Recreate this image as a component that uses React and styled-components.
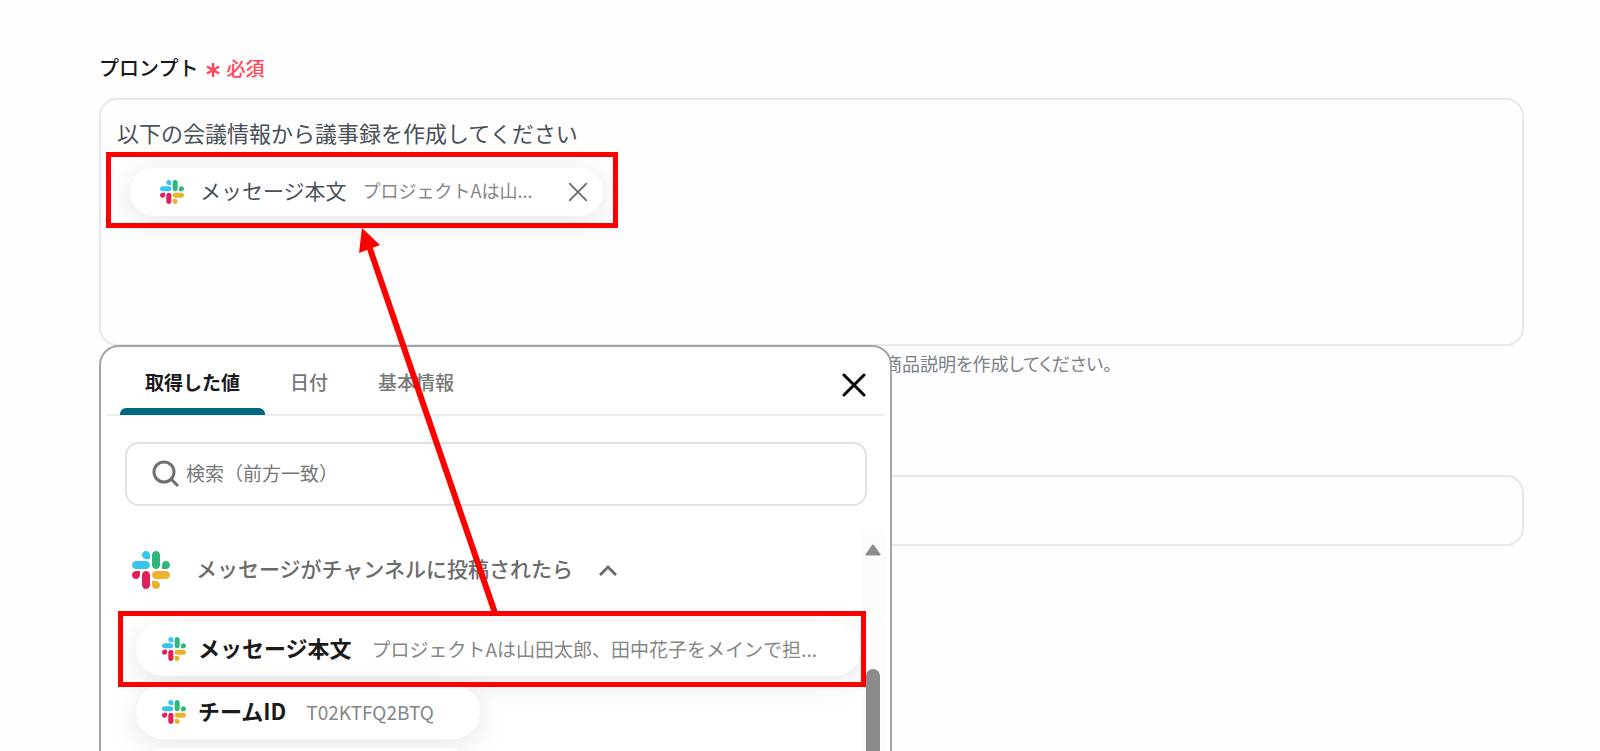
import React from "react";
import styled, { createGlobalStyle } from "styled-components";

const rows = [
  {
    name: "メッセージ本文",
    value: "プロジェクトAは山田太郎、田中花子をメインで担...",
    wide: true,
  },
  { name: "チームID", value: "T02KTFQ2BTQ" },
];

const SlackLogo = ({ size }) => (
  <Logo width={size} height={size} viewBox="0 0 122.8 122.8" aria-hidden="true">
    <path
      fill="#e01e5a"
      d="M25.8 77.6c0 7.1-5.8 12.9-12.9 12.9S0 84.7 0 77.6s5.8-12.9 12.9-12.9h12.9v12.9zm6.5 0c0-7.1 5.8-12.9 12.9-12.9s12.9 5.8 12.9 12.9v32.3c0 7.1-5.8 12.9-12.9 12.9s-12.9-5.8-12.9-12.9V77.6z"
    />
    <path
      fill="#36c5f0"
      d="M45.2 25.8c-7.1 0-12.9-5.8-12.9-12.9S38.1 0 45.2 0s12.9 5.8 12.9 12.9v12.9H45.2zm0 6.5c7.1 0 12.9 5.8 12.9 12.9s-5.8 12.9-12.9 12.9H12.9C5.8 58.1 0 52.3 0 45.2s5.8-12.9 12.9-12.9h32.3z"
    />
    <path
      fill="#2eb67d"
      d="M97 45.2c0-7.1 5.8-12.9 12.9-12.9s12.9 5.8 12.9 12.9-5.8 12.9-12.9 12.9H97V45.2zm-6.5 0c0 7.1-5.8 12.9-12.9 12.9s-12.9-5.8-12.9-12.9V12.9C64.7 5.8 70.5 0 77.6 0s12.9 5.8 12.9 12.9v32.3z"
    />
    <path
      fill="#ecb22e"
      d="M77.6 97c7.1 0 12.9 5.8 12.9 12.9s-5.8 12.9-12.9 12.9-12.9-5.8-12.9-12.9V97h12.9zm0-6.5c-7.1 0-12.9-5.8-12.9-12.9s5.8-12.9 12.9-12.9h32.3c7.1 0 12.9 5.8 12.9 12.9s-5.8 12.9-12.9 12.9H77.6z"
    />
  </Logo>
);

const CrossIcon = ({ size, weight }) => (
  <svg width={size} height={size} viewBox="0 0 24 24" aria-hidden="true">
    <path
      d="M2 2l20 20M22 2L2 22"
      stroke="currentColor"
      strokeWidth={weight}
      strokeLinecap="round"
      fill="none"
    />
  </svg>
);

const App = () => {
  return (
    <>
      <GlobalStyle />
      <Page>
        <FieldLabel htmlFor="prompt">
          プロンプト
          <Required>
            <svg width="14" height="14" viewBox="0 0 14 14" aria-hidden="true">
              <path
                d="M7 0v14M1 3.500l12 7M13 3.500L1 10.500"
                stroke="currentColor"
                strokeWidth="2.4"
              />
            </svg>
            必須
          </Required>
        </FieldLabel>

        <Anchor>
          <PromptBox>
            <PromptText
              id="prompt"
              rows={1}
              defaultValue="以下の会議情報から議事録を作成してください"
            />
            <Token>
              <SlackLogo size={24} />
              <TokenName>メッセージ本文</TokenName>
              <TokenValue>プロジェクトAは山...</TokenValue>
              <IconButton type="button" aria-label="削除">
                <CrossIcon size={20} weight={2} />
              </IconButton>
            </Token>
          </PromptBox>

          <Picker>
            <Tabs>
              <Tab type="button" $active>
                取得した値
              </Tab>
              <Tab type="button">日付</Tab>
              <Tab type="button">基本情報</Tab>
              <CloseButton type="button" aria-label="閉じる">
                <CrossIcon size={24} weight={3} />
              </CloseButton>
            </Tabs>

            <Search>
              <svg width="28" height="28" viewBox="0 0 28 28" aria-hidden="true">
                <circle cx="12" cy="12" r="10" />
                <path d="M19 19l7 7" />
              </svg>
              <SearchInput
                type="text"
                placeholder="検索（前方一致）"
                aria-label="検索（前方一致）"
              />
            </Search>

            <Results>
              <List>
                <Group type="button">
                  <SlackLogo size={38} />
                  <GroupName>メッセージがチャンネルに投稿されたら</GroupName>
                  <svg width="18" height="12" viewBox="0 0 18 12" aria-hidden="true">
                    <path
                      d="M1 11l8-8 8 8"
                      stroke="#6b6b6b"
                      strokeWidth="3"
                      fill="none"
                    />
                  </svg>
                </Group>
                {rows.map((row) => (
                  <Row type="button" key={row.name} $wide={row.wide}>
                    <SlackLogo size={24} />
                    <RowName>{row.name}</RowName>
                    <RowValue>{row.value}</RowValue>
                  </Row>
                ))}
                <EmptyRow />
              </List>
              <Track>
                <UpArrow width="16" height="12" viewBox="0 0 16 12" aria-hidden="true">
                  <path d="M8 1.500L14.500 10.500H1.500z" />
                </UpArrow>
                <Thumb />
              </Track>
            </Results>
          </Picker>
        </Anchor>

        <Hint>商品説明を作成してください。</Hint>
        <TextField type="text" aria-label="入力" />

        <Marker $left={106} $top={152} $width={512} $height={76} />
        <Marker $left={118} $top={611} $width={748} $height={76} />
        <Arrow width="160" height="400" viewBox="0 0 160 400" aria-hidden="true">
          <path d="M29 18L155 385" stroke="#ff0000" strokeWidth="6" />
          <path d="M22 0L19 25L40 17z" fill="#ff0000" />
        </Arrow>
      </Page>
    </>
  );
};

export default App;

const GlobalStyle = createGlobalStyle`
  * {
    box-sizing: border-box;
  }

  body {
    margin: 0;
    background: #fefefe;
    font-family: "Noto Sans CJK JP", "Noto Sans", sans-serif;
    overflow: hidden;
  }

  button,
  input,
  textarea {
    font-family: inherit;
    margin: 0;
    padding: 0;
    border: 0;
    background: none;
    outline: none;
  }
`;

const Logo = styled.svg`
  flex: none;
`;

const Page = styled.main`
  position: relative;
  height: 100vh;
  overflow: hidden;
  padding: 50px 76px 0 99px;
`;

const FieldLabel = styled.label`
  display: flex;
  align-items: center;
  gap: 8px;
  height: 48px;
  padding-bottom: 14px;
  color: #1a1a1a;
  font-size: 20px;
  font-weight: 500;
`;

const Required = styled.span`
  display: flex;
  align-items: center;
  gap: 6px;
  color: #ff4757;
  font-size: 19px;

  svg {
    margin-top: 5px;
  }
`;

const Anchor = styled.div`
  position: relative;
`;

const PromptBox = styled.div`
  height: 248px;
  padding: 14px 16px;
  border: 2px solid #e5e8ec;
  border-radius: 18px;
`;

const PromptText = styled.textarea`
  display: block;
  width: 100%;
  height: 36px;
  color: #495057;
  font-size: 22px;
  line-height: 36px;
  resize: none;
  overflow: hidden;
`;

const Token = styled.div`
  display: flex;
  align-items: center;
  width: 473px;
  height: 48px;
  margin: 18px 0 0 13px;
  padding: 0 15px 0 30px;
  border-radius: 24px;
  background: #fff;
  box-shadow: 0 6px 32px rgba(0, 0, 0, 0.1);
`;

const TokenName = styled.span`
  margin-left: 16px;
  padding-bottom: 4px;
  color: #495057;
  font-size: 21px;
`;

const TokenValue = styled.span`
  margin-left: 16px;
  padding-bottom: 4px;
  color: #868686;
  font-size: 18px;
`;

const IconButton = styled.button`
  display: flex;
  margin-left: auto;
  color: #666;
`;

const Picker = styled.section`
  position: absolute;
  top: 247px;
  left: 0;
  width: 793px;
  height: 440px;
  padding: 0 5px;
  border: 2px solid #a3a5a5;
  border-radius: 20px;
  background: #fff;
`;

const Tabs = styled.div`
  display: flex;
  height: 69px;
  padding-left: 14px;
  border-bottom: 2px solid #ececec;
`;

const Tab = styled.button`
  position: relative;
  padding: 2px 25px 0;
  color: ${({ $active }) => ($active ? "#1a1a1a" : "#777")};
  font-size: 19px;
  font-weight: ${({ $active }) => ($active ? 700 : 500)};

  &::after {
    content: "";
    display: ${({ $active }) => ($active ? "block" : "none")};
    position: absolute;
    left: 0;
    right: 0;
    bottom: -1px;
    height: 7px;
    border-radius: 6px 6px 0 0;
    background: #00677f;
  }
`;

const CloseButton = styled.button`
  display: flex;
  align-items: center;
  margin-left: auto;
  padding: 8px 19px 0 0;
  color: #000;
`;

const Search = styled.div`
  display: flex;
  align-items: center;
  gap: 6px;
  height: 64px;
  margin: 26px 18px 0 19px;
  padding: 0 25px;
  border: 2px solid #e1e1e1;
  border-radius: 14px;

  svg {
    fill: none;
    stroke: #6f6f6f;
    stroke-width: 3px;
  }
`;

const SearchInput = styled.input`
  flex: 1;
  height: 40px;
  padding-bottom: 4px;
  font-size: 19px;

  &::placeholder {
    color: #777;
  }
`;

const Results = styled.div`
  display: flex;
  margin-top: 25px;
  height: 260px;
  overflow: hidden;
`;

const List = styled.div`
  flex: 1;
  display: flex;
  flex-direction: column;
  align-items: flex-start;
  gap: 9px;
  padding-left: 30px;
`;

const Group = styled.button`
  flex: none;
  display: flex;
  align-items: center;
  height: 78px;
  margin: 0 0 4px -4px;
`;

const GroupName = styled.span`
  margin: 0 26px;
  padding-bottom: 4px;
  color: #6b6b6b;
  font-size: 21px;
  font-weight: 500;
`;

const Row = styled.button`
  flex: none;
  display: flex;
  align-items: center;
  width: ${({ $wide }) => ($wide ? "100%" : "auto")};
  height: 54px;
  padding: 0 ${({ $wide }) => ($wide ? 26 : 46)}px 0 26px;
  border-radius: 27px;
  background: #fff;
  box-shadow: 0 6px 32px rgba(0, 0, 0, 0.1);
  white-space: nowrap;
`;

const RowName = styled.span`
  margin-left: 12px;
  padding-bottom: 4px;
  color: #1a1a1a;
  font-size: 22px;
  font-weight: 700;
`;

const RowValue = styled.span`
  margin-left: 20px;
  padding-bottom: 2px;
  color: #868686;
  font-size: 19px;
`;

const EmptyRow = styled.div`
  flex: none;
  width: 338px;
  height: 54px;
  border-radius: 27px;
  background: #fff;
`;

const Track = styled.div`
  flex: none;
  display: flex;
  flex-direction: column;
  align-items: center;
  width: 24px;
  padding-top: 13px;
  background: #fcfcfc;
`;

const UpArrow = styled.svg`
  flex: none;
  fill: #8b8b8b;
  stroke: #8b8b8b;
  stroke-width: 2px;
  stroke-linejoin: round;
`;

const Thumb = styled.div`
  flex: none;
  width: 14px;
  height: 200px;
  margin-top: 113px;
  border-radius: 7px;
  background: #8b8b8b;
`;

const Hint = styled.p`
  margin: 0;
  padding-left: 785px;
  color: #79808a;
  font-size: 18px;
  line-height: 34px;
  font-feature-settings: "palt";
`;

const TextField = styled.input`
  display: block;
  width: 100%;
  height: 71px;
  margin-top: 95px;
  padding: 0 16px;
  border: 2px solid #e5e8ec;
  border-radius: 18px;
`;

const Marker = styled.div`
  position: absolute;
  left: ${({ $left }) => $left}px;
  top: ${({ $top }) => $top}px;
  width: ${({ $width }) => $width}px;
  height: ${({ $height }) => $height}px;
  border: 5px solid #ff0000;
  pointer-events: none;
`;

const Arrow = styled.svg`
  position: absolute;
  left: 340px;
  top: 228px;
  pointer-events: none;
`;
